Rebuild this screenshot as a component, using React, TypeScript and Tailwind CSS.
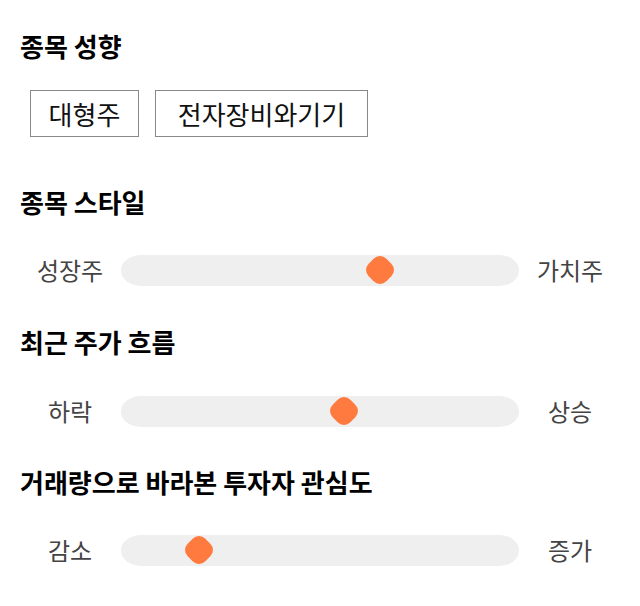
const FONT = "font-['Noto_Sans_CJK_KR','Noto_Sans',sans-serif]";

function Heading({ children }: { children: string }) {
  return <h2 className="text-[26px] font-bold leading-[32px] text-black">{children}</h2>;
}

function Slider({ left, right, value }: { left: string; right: string; value: number }) {
  return (
    <div className="flex h-[48px] items-center">
      <span className="w-[100px] text-center text-[24px] leading-[30px] text-[#444]">{left}</span>
      <div className="relative mx-[1px] h-[31px] flex-1 rounded-[20px/15px] bg-[#efefef]">
        <div
          className="absolute top-1/2 h-[25px] w-[25px] -translate-x-1/2 -translate-y-1/2 rotate-45 rounded-[9px] bg-[#ff7a3e]"
          style={{ left: `${value}%` }}
        />
      </div>
      <span className="w-[100px] text-center text-[24px] leading-[30px] text-[#444]">{right}</span>
    </div>
  );
}

export default function App() {
  return (
    <div className={`${FONT} h-[606px] w-[640px] bg-white px-5 pt-[30px]`}>
      <section>
        <Heading>종목 성향</Heading>
        <div className="mt-[28px] flex gap-4 pl-[10px]">
          {["대형주", "전자장비와기기"].map((t, i) => (
            <span
              key={t}
              className={`flex h-[47px] items-center justify-center border border-[#888] text-[26px] text-[#111] ${
                i === 0 ? "w-[109px]" : "w-[213px]"
              }`}
            >
              {t}
            </span>
          ))}
        </div>
      </section>

      <section className="mt-[49px]">
        <Heading>종목 스타일</Heading>
        <div className="mt-[28px]">
          <Slider left="성장주" right="가치주" value={65} />
        </div>
      </section>

      <section className="mt-[32px]">
        <Heading>최근 주가 흐름</Heading>
        <div className="mt-[29px]">
          <Slider left="하락" right="상승" value={56} />
        </div>
      </section>

      <section className="mt-[31px]">
        <Heading>거래량으로 바라본 투자자 관심도</Heading>
        <div className="mt-[28px]">
          <Slider left="감소" right="증가" value={19.5} />
        </div>
      </section>
    </div>
  );
}
